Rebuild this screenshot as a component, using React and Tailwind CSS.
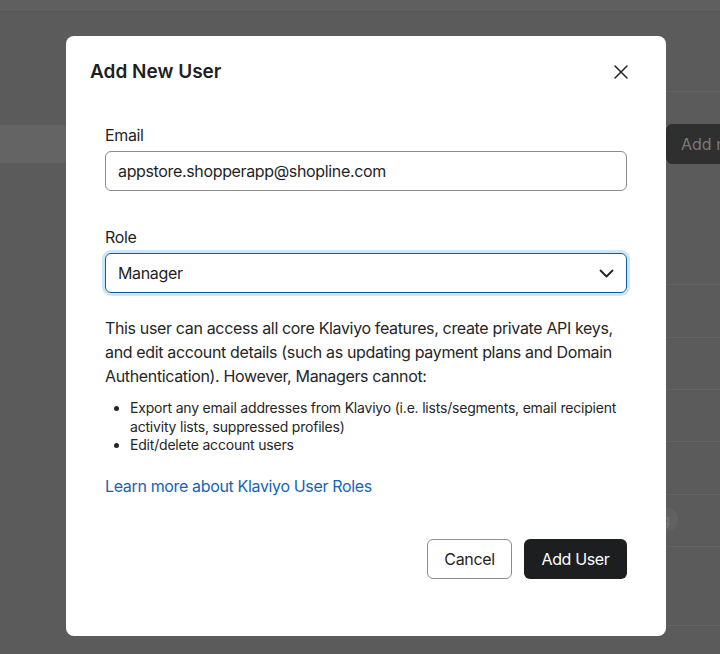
import React from 'react'

const rowLines = ['h-[122px]', 'h-[53px]', 'h-[52px]', 'h-[52px]', 'h-[53px]', 'h-[52px]', 'h-[79px]']

function Backdrop() {
  return (
    <div className="flex h-full flex-col bg-[#5b5b5c]">
      <div className="h-[12px] border-b border-[#555556] bg-[#5f5f60]" />
      <div className="ml-[80px] h-[80px] border-b border-[#636364]" />
      <div className="h-[33px]" />
      <div className="flex h-[38px] items-center justify-end bg-[#646465]">
        <div className="-mr-[40px] flex h-[40px] w-[94px] items-center rounded-l-[6px] bg-[#2f2f30] pl-[15px] text-[16px] whitespace-nowrap text-[#7a7a7b]">
          Add new
        </div>
      </div>
      <div className="ml-[80px] flex flex-col">
        {rowLines.map((h, i) => (
          <div key={i} className={`${h} relative border-b border-[#636364]`}>
            {i === 5 && (
              <span className="absolute top-[12px] right-[42px] rounded-full bg-[#616162] px-2 py-[2px] text-[14px] text-[#777778]">
                Tag
              </span>
            )}
          </div>
        ))}
      </div>
    </div>
  )
}

function CloseIcon() {
  return (
    <svg width="14" height="14" viewBox="0 0 14 14" fill="none" stroke="#222" strokeWidth="1.5" strokeLinecap="round">
      <path d="M1 1L13 13M13 1L1 13" />
    </svg>
  )
}

function Chevron() {
  return (
    <svg width="15" height="9" viewBox="0 0 15 9" fill="none" stroke="#222" strokeWidth="1.8" strokeLinecap="round" strokeLinejoin="round">
      <path d="M1.5 1.5L7.5 7.5L13.5 1.5" />
    </svg>
  )
}

function AddUserModal() {
  return (
    <div className="absolute top-[36px] left-[66px] flex h-[600px] w-[600px] flex-col rounded-[8px] bg-white text-[#1f1f1f]">
      <div className="flex items-center justify-between pt-[22px] pr-[35px] pl-[24px]">
        <h2 className="text-[19px] leading-[28px] font-semibold">Add New User</h2>
        <button className="flex h-[20px] w-[20px] items-center justify-center">
          <CloseIcon />
        </button>
      </div>

      <div className="flex flex-col px-[39px] pt-[37px] tracking-[-0.35px]">
        <label className="mb-[4px] text-[16px] leading-[24px]">Email</label>
        <div className="flex h-[40px] items-center rounded-[6px] border border-[#8c8c8c] px-[12px] text-[16px]">
          appstore.shopperapp@shopline.com
        </div>

        <label className="mt-[34px] mb-[4px] text-[16px] leading-[24px]">Role</label>
        <div className="flex h-[40px] items-center justify-between rounded-[6px] border border-[#0b5ea6] px-[12px] text-[16px] ring-[3px] ring-[#cce6f7]">
          <span>Manager</span>
          <Chevron />
        </div>

        <p className="mt-[23px] text-[16px] leading-[24px] text-[#262626]">
          This user can access all core Klaviyo features, create private API keys, and edit account details (such as updating
          payment plans and Domain Authentication). However, Managers cannot:
        </p>
        <ul className="mt-[11px] list-disc pl-[25px] text-[14px] leading-[18.5px] tracking-[-0.2px] text-[#262626]">
          <li>
            Export any email addresses from Klaviyo (i.e. lists/segments, email recipient activity lists, suppressed profiles)
          </li>
          <li>Edit/delete account users</li>
        </ul>

        <a className="mt-[19px] text-[16px] leading-[24px] text-[#1663b4]">Learn more about Klaviyo User Roles</a>

        <div className="mt-[41px] flex justify-end gap-[12px]">
          <button className="h-[40px] w-[85px] rounded-[6px] border border-[#8c8c8c] text-[16px]">Cancel</button>
          <button className="h-[40px] w-[103px] rounded-[6px] bg-[#1d1e20] text-[16px] text-white">Add User</button>
        </div>
      </div>
    </div>
  )
}

export default function App() {
  return (
    <div className="relative h-[654px] w-[720px] overflow-hidden font-['Inter',_'Liberation_Sans',_sans-serif]">
      <Backdrop />
      <AddUserModal />
    </div>
  )
}
